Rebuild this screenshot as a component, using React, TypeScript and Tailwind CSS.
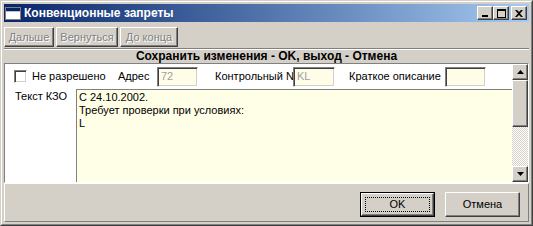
import React from 'react';

const raised =
  'border border-t-white border-l-white border-r-[#404040] border-b-[#404040] shadow-[inset_-1px_-1px_#808080]';
const sunken =
  'border border-t-[#808080] border-l-[#808080] border-r-white border-b-white shadow-[inset_1px_1px_#404040,inset_-1px_-1px_#d4d0c8]';

const TitleButton = ({ children }: { children: React.ReactNode }) => (
  <div className={`w-[16px] h-[14px] bg-[#d4d0c8] flex items-center justify-center ${raised}`}>{children}</div>
);

const ToolButton = ({ label, w }: { label: string; w: string }) => (
  <div
    className={`${w} h-[20px] flex items-center justify-center bg-[#d4d0c8] text-[#808080] [text-shadow:1px_1px_0_#ffffff] ${raised}`}
  >
    {label}
  </div>
);

const Field = ({ w, value }: { w: string; value?: string }) => (
  <div className={`${w} shrink-0 h-[20px] bg-[#fffde8] text-[#a0a0a0] pl-[3px] flex items-center ${sunken}`}>{value}</div>
);

const App = () => {
  return (
    <div className="w-[533px] h-[226px] bg-[#d4d0c8] text-black text-[11px] font-['Liberation_Sans',Arial,sans-serif] border border-t-[#d4d0c8] border-l-[#d4d0c8] border-r-[#404040] border-b-[#404040]">
      <div className="w-full h-full border border-t-white border-l-white border-r-[#808080] border-b-[#808080] p-[2px] flex flex-col">
        {/* title bar */}
        <div className="h-[18px] shrink-0 flex items-center bg-gradient-to-r from-[#0a246a] to-[#a6caf0] pl-[1px] pr-[2px]">
          <svg width="16" height="16" viewBox="0 0 16 16" className="shrink-0">
            <rect x="0.5" y="2.5" width="15" height="12" fill="#ffffff" stroke="#808080" />
            <rect x="1" y="3" width="14" height="3" fill="#0a246a" />
            <rect x="1" y="6" width="14" height="1" fill="#c0c0c0" />
          </svg>
          <span className="ml-[3px] text-white font-bold text-[12px] leading-none">Конвенционные запреты</span>
          <div className="ml-auto flex items-center">
            <TitleButton>
              <svg width="8" height="7" viewBox="0 0 8 7">
                <rect x="1" y="5" width="6" height="2" fill="#000" />
              </svg>
            </TitleButton>
            <TitleButton>
              <svg width="9" height="9" viewBox="0 0 9 9">
                <rect x="0.5" y="0.5" width="8" height="8" fill="none" stroke="#000" />
                <rect x="0" y="1" width="9" height="1" fill="#000" />
              </svg>
            </TitleButton>
            <div className="ml-[2px]">
              <TitleButton>
                <svg width="8" height="7" viewBox="0 0 8 7">
                  <path d="M0 0 L2 0 L4 2 L6 0 L8 0 L5 3.5 L8 7 L6 7 L4 5 L2 7 L0 7 L3 3.5 Z" fill="#000" />
                </svg>
              </TitleButton>
            </div>
          </div>
        </div>

        {/* toolbar */}
        <div className="mt-[5px] h-[20px] shrink-0 flex gap-[2px]">
          <ToolButton label="Дальше" w="w-[50px]" />
          <ToolButton label="Вернуться" w="w-[62px]" />
          <ToolButton label="До конца" w="w-[58px]" />
        </div>

        <div className="mt-[1px] h-[2px] shrink-0 border-t border-t-[#808080] border-b border-b-white" />

        <div className="h-[13px] shrink-0 leading-[13px] text-center font-bold text-[12px]">
          Сохранить изменения - OK, выход - Отмена
        </div>

        {/* main panel */}
        <div className={`h-[120px] shrink-0 flex ${sunken}`}>
          <div className="flex-1 min-w-0 flex flex-col bg-white">
            <div className="h-[25px] flex items-center whitespace-nowrap">
              <div className={`ml-[9px] shrink-0 w-[13px] h-[13px] bg-white ${sunken}`} />
              <span className="ml-[5px] shrink-0 w-[86px]">Не разрешено</span>
              <span className="shrink-0 w-[39px]">Адрес</span>
              <Field w="w-[41px]" value="72" />
              <span className="ml-[17px] shrink-0 w-[78px]">Контрольный N</span>
              <Field w="w-[42px]" value="KL" />
              <span className="ml-[14px] shrink-0 w-[96px]">Краткое описание</span>
              <Field w="w-[41px]" />
            </div>
            <div className="flex-1 flex">
              <div className="w-[71px] shrink-0 pl-[10px] pt-[1px] leading-[13px] whitespace-nowrap">Текст КЗО</div>
              <div className="flex-1 bg-[#ffffe8] border-t border-l border-[#808080] px-[2px] pt-[1px] leading-[13px]">
                <div>С 24.10.2002.</div>
                <div>Требует проверки при условиях:</div>
                <div>L</div>
              </div>
            </div>
          </div>

          {/* scrollbar */}
          <div className="w-[16px] shrink-0 flex flex-col">
            <div className={`h-[16px] bg-[#d4d0c8] flex items-center justify-center ${raised}`}>
              <svg width="7" height="4" viewBox="0 0 7 4">
                <path d="M3.5 0 L7 4 L0 4 Z" fill="#000" />
              </svg>
            </div>
            <div className={`h-[47px] bg-[#d4d0c8] ${raised}`} />
            <div className="flex-1 bg-[repeating-conic-gradient(#d4d0c8_0%_25%,#ffffff_0%_50%)] bg-[length:2px_2px]" />
            <div className={`h-[16px] bg-[#d4d0c8] flex items-center justify-center ${raised}`}>
              <svg width="7" height="4" viewBox="0 0 7 4">
                <path d="M0 0 L7 0 L3.5 4 Z" fill="#000" />
              </svg>
            </div>
          </div>
        </div>

        {/* bottom buttons */}
        <div className="flex-1 flex justify-end items-start gap-[10px] pt-[8px] pr-[8px] border border-t-white border-l-white border-r-[#808080] border-b-[#808080]">
          <div className="w-[75px] h-[25px] border border-black">
            <div className={`w-full h-full bg-[#d4d0c8] p-[3px] ${raised}`}>
              <div className="w-full h-full border border-dotted border-black flex items-center justify-center">OK</div>
            </div>
          </div>
          <div className={`w-[75px] h-[25px] bg-[#d4d0c8] flex items-center justify-center ${raised}`}>Отмена</div>
        </div>
      </div>
    </div>
  );
};

export default App;
